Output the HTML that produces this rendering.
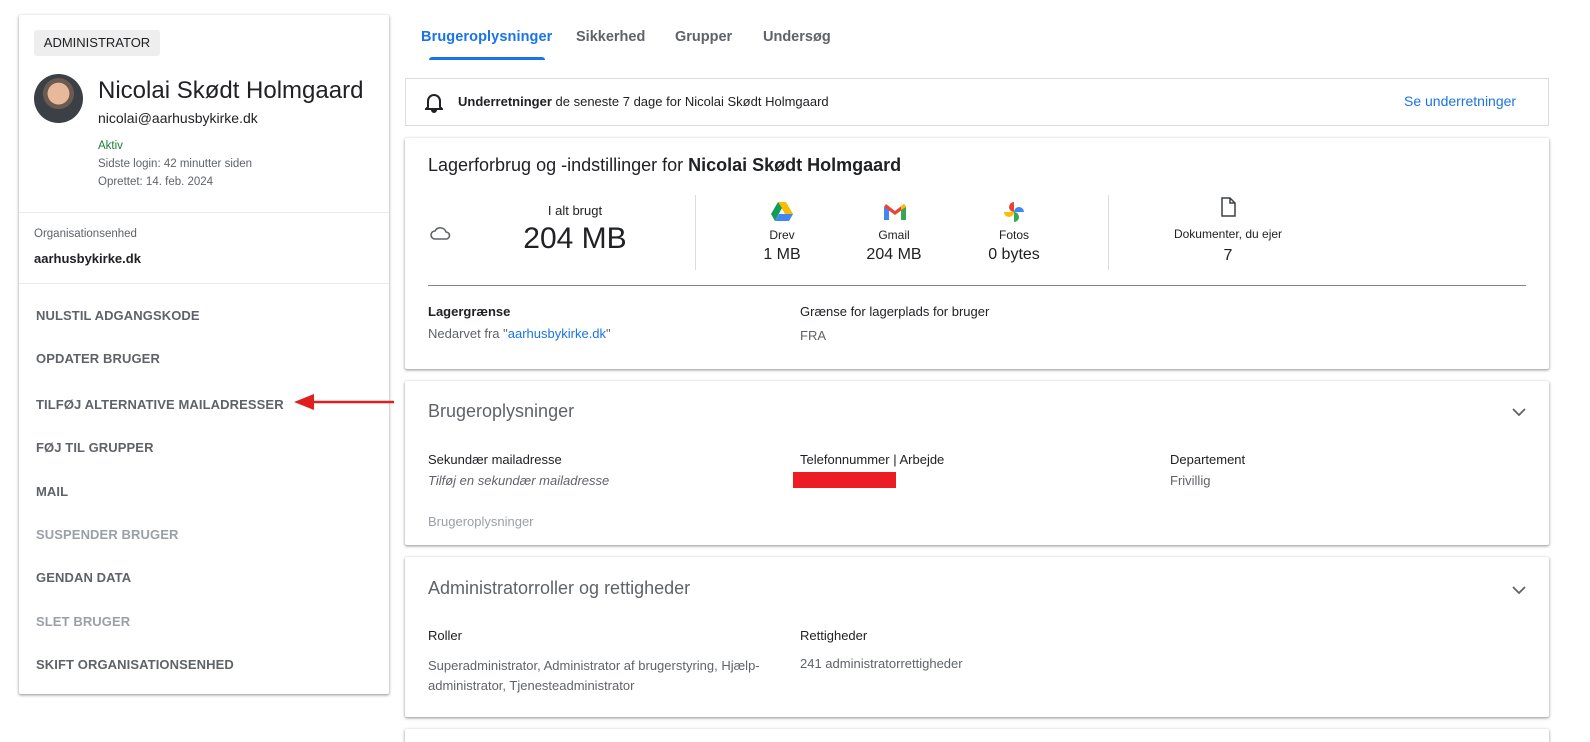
<!DOCTYPE html>
<html><head><meta charset="utf-8"><style>
*{margin:0;padding:0;box-sizing:border-box}
html,body{width:1590px;height:742px;overflow:hidden}
body{background:#fff;font-family:"Liberation Sans",Arial,sans-serif;color:#202124;position:relative}
.a{position:absolute;white-space:nowrap}
.card{position:absolute;background:#fff;box-shadow:0 1px 2px rgba(0,0,0,.3),0 1px 3px 1px rgba(0,0,0,.12);border-radius:2px}
.menu{position:absolute;left:36px;font-size:13px;font-weight:bold;color:#5f6368;letter-spacing:.1px}
.gray{color:#5f6368}
.lt{color:#9aa0a6}
</style></head><body>
<div class="card" style="left:19px;top:15px;width:370px;height:679px"></div>
<div class="a" style="left:34px;top:30px;width:126px;height:26px;background:#eee;border-radius:3px;font-size:13px;line-height:26px;text-align:center">ADMINISTRATOR</div>
<div class="a" style="left:34px;top:74px;width:49px;height:49px;border-radius:50%;background:radial-gradient(circle at 50% 40%,#e8b89a 0 28%,#6b5a50 29% 40%,#3b3f46 41%)"></div>
<div class="a" style="left:98px;top:77px;font-size:24px">Nicolai Skødt Holmgaard</div>
<div class="a" style="left:98px;top:110px;font-size:14px">nicolai@aarhusbykirke.dk</div>
<div class="a" style="left:98px;top:140px;font-size:11.5px;color:#188038">Aktiv</div>
<div class="a gray" style="left:98px;top:158px;font-size:11.5px">Sidste login: 42 minutter siden</div>
<div class="a gray" style="left:98px;top:176px;font-size:11.5px">Oprettet: 14. feb. 2024</div>
<div class="a" style="left:19px;top:212px;width:370px;height:1px;background:#e8eaed"></div>
<div class="a gray" style="left:34px;top:228px;font-size:11.5px">Organisationsenhed</div>
<div class="a" style="left:34px;top:251px;font-size:13px;font-weight:bold">aarhusbykirke.dk</div>
<div class="a" style="left:19px;top:283px;width:370px;height:1px;background:#e8eaed"></div>
<div class="menu" style="top:308px">NULSTIL ADGANGSKODE</div>
<div class="menu" style="top:351px">OPDATER BRUGER</div>
<div class="menu" style="top:397px">TILFØJ ALTERNATIVE MAILADRESSER</div>
<div class="menu" style="top:440px">FØJ TIL GRUPPER</div>
<div class="menu" style="top:484px">MAIL</div>
<div class="menu" style="top:527px;color:#9aa0a6">SUSPENDER BRUGER</div>
<div class="menu" style="top:570px">GENDAN DATA</div>
<div class="menu" style="top:614px;color:#9aa0a6">SLET BRUGER</div>
<div class="menu" style="top:657px">SKIFT ORGANISATIONSENHED</div>
<svg class="a" style="left:290px;top:392px" width="106" height="20"><line x1="20" y1="10" x2="104" y2="10" stroke="#e0201f" stroke-width="2.5"/><polygon points="4,10 24,2 24,18" fill="#e0201f"/></svg>
<div class="a" style="left:421px;top:29px;font-size:14.5px;color:#1a73e8;font-weight:bold;letter-spacing:.1px">Brugeroplysninger</div>
<div class="a gray" style="left:576px;top:29px;font-size:14.5px;font-weight:bold">Sikkerhed</div>
<div class="a gray" style="left:675px;top:29px;font-size:14.5px;font-weight:bold">Grupper</div>
<div class="a gray" style="left:763px;top:29px;font-size:14.5px;font-weight:bold">Undersøg</div>
<div class="a" style="left:429px;top:57px;width:116px;height:3px;background:#1a73e8;border-radius:3px 3px 0 0"></div>
<div class="a" style="left:405px;top:78px;width:1144px;height:48px;border:1px solid #dadce0"></div>
<svg class="a" style="left:425px;top:91px" width="18" height="22" viewBox="0 0 18 22"><path d="M3 16V10a6 6 0 0 1 12 0v6l2 2H1z M7 19h4a2 2 0 0 1-4 0" fill="none" stroke="#202124" stroke-width="2"/></svg>
<div class="a" style="left:458px;top:94px;font-size:13px"><b>Underretninger</b> de seneste 7 dage for Nicolai Skødt Holmgaard</div>
<div class="a" style="left:1404px;top:93px;font-size:14px;color:#1a73e8">Se underretninger</div>
<div class="card" style="left:405px;top:138px;width:1144px;height:231px"></div>
<div class="a" style="left:428px;top:155px;font-size:18px">Lagerforbrug og -indstillinger for <b>Nicolai Skødt Holmgaard</b></div>
<svg class="a" style="left:430px;top:225px" width="22" height="16" viewBox="0 0 22 16"><path d="M5 14a4 4 0 0 1 0-8 6 6 0 0 1 11 1 3.5 3.5 0 0 1 0 7z" fill="none" stroke="#5f6368" stroke-width="1.6"/></svg>
<div class="a" style="left:523px;top:203px;width:104px;text-align:center;font-size:13px">I alt brugt</div>
<div class="a" style="left:500px;top:222px;width:150px;text-align:center;font-size:30px">204 MB</div>
<div class="a" style="left:695px;top:195px;width:1px;height:75px;background:#dadce0"></div>
<div class="a" style="left:1108px;top:195px;width:1px;height:75px;background:#dadce0"></div>
<svg class="a" style="left:771px;top:202px" width="22" height="19" viewBox="0 0 22 19"><polygon points="7,0 15,0 22,12 18,19" fill="#fbbc04"/><polygon points="7,0 0,12 4,19 11,6" fill="#0f9d58"/><polygon points="4,19 18,19 22,12 8,12" fill="#4285f4"/></svg>
<svg class="a" style="left:884px;top:204px" width="22" height="16" viewBox="0 0 22 16"><path d="M0 3v13h5V6z" fill="#4285f4"/><path d="M17 6v10h5V3z" fill="#34a853"/><path d="M0 3l11 8 11-8-2-3-9 7-9-7z" fill="#ea4335"/><path d="M17 6l5-3v-1l-2-2-3 2z" fill="#fbbc04"/></svg>
<svg class="a" style="left:1003px;top:201px" width="22" height="22" viewBox="0 0 22 22"><path d="M11 11V1a5 5 0 0 0 0 10z" fill="#ea4335"/><path d="M11 11h10a5 5 0 0 0-10 0z" fill="#4285f4"/><path d="M11 11v10a5 5 0 0 0 0-10z" fill="#34a853"/><path d="M11 11H1a5 5 0 0 0 10 0z" fill="#fbbc04"/></svg>
<div class="a" style="left:744px;top:228px;width:76px;text-align:center;font-size:12px">Drev</div>
<div class="a" style="left:744px;top:246px;width:76px;text-align:center;font-size:16px">1 MB</div>
<div class="a" style="left:856px;top:228px;width:76px;text-align:center;font-size:12px">Gmail</div>
<div class="a" style="left:856px;top:246px;width:76px;text-align:center;font-size:16px">204 MB</div>
<div class="a" style="left:976px;top:228px;width:76px;text-align:center;font-size:12px">Fotos</div>
<div class="a" style="left:966px;top:246px;width:96px;text-align:center;font-size:16px">0 bytes</div>
<svg class="a" style="left:1220px;top:197px" width="16" height="20" viewBox="0 0 16 20"><path d="M2 1h8l5 5v13H2z M10 1v5h5" fill="none" stroke="#3c4043" stroke-width="1.5"/></svg>
<div class="a" style="left:1160px;top:227px;width:136px;text-align:center;font-size:12px">Dokumenter, du ejer</div>
<div class="a" style="left:1160px;top:247px;width:136px;text-align:center;font-size:16px">7</div>
<div class="a" style="left:428px;top:285px;width:1098px;height:1px;background:#80868b"></div>
<div class="a" style="left:428px;top:304px;font-size:13px;font-weight:bold">Lagergrænse</div>
<div class="a gray" style="left:428px;top:326px;font-size:13px">Nedarvet fra "<span style="color:#1a73e8">aarhusbykirke.dk</span>"</div>
<div class="a" style="left:800px;top:304px;font-size:13px">Grænse for lagerplads for bruger</div>
<div class="a gray" style="left:800px;top:328px;font-size:13px">FRA</div>
<div class="card" style="left:405px;top:381px;width:1144px;height:164px"></div>
<div class="a gray" style="left:428px;top:401px;font-size:18px">Brugeroplysninger</div>
<svg class="a" style="left:1512px;top:408px" width="14" height="9" viewBox="0 0 14 9"><path d="M1 1l6 6 6-6" fill="none" stroke="#5f6368" stroke-width="1.8"/></svg>
<div class="a" style="left:428px;top:452px;font-size:13px">Sekundær mailadresse</div>
<div class="a gray" style="left:428px;top:473px;font-size:13px;font-style:italic">Tilføj en sekundær mailadresse</div>
<div class="a" style="left:800px;top:452px;font-size:13px">Telefonnummer | Arbejde</div>
<div class="a" style="left:793px;top:472px;width:103px;height:16px;background:#ed1c24"></div>
<div class="a" style="left:1170px;top:452px;font-size:13px">Departement</div>
<div class="a gray" style="left:1170px;top:473px;font-size:13px">Frivillig</div>
<div class="a lt" style="left:428px;top:514px;font-size:13px">Brugeroplysninger</div>
<div class="card" style="left:405px;top:557px;width:1144px;height:160px"></div>
<div class="a gray" style="left:428px;top:578px;font-size:18px">Administratorroller og rettigheder</div>
<svg class="a" style="left:1512px;top:586px" width="14" height="9" viewBox="0 0 14 9"><path d="M1 1l6 6 6-6" fill="none" stroke="#5f6368" stroke-width="1.8"/></svg>
<div class="a" style="left:428px;top:628px;font-size:13px">Roller</div>
<div class="a gray" style="left:428px;top:656px;font-size:13px;line-height:20px;white-space:normal;width:360px">Superadministrator, Administrator af brugerstyring, Hjælp-administrator, Tjenesteadministrator</div>
<div class="a" style="left:800px;top:628px;font-size:13px">Rettigheder</div>
<div class="a gray" style="left:800px;top:656px;font-size:13px">241 administratorrettigheder</div>
<div class="card" style="left:405px;top:729px;width:1144px;height:13px;border-radius:2px 2px 0 0"></div>
</body></html>
